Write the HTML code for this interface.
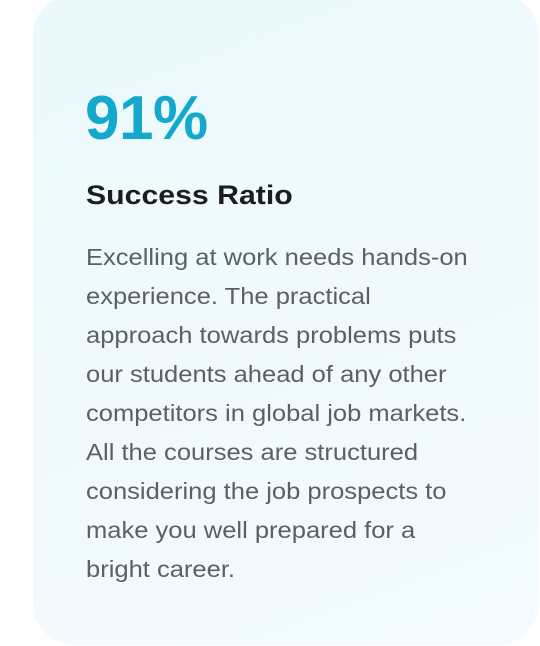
<!DOCTYPE html>
<html><head><style>
html,body{margin:0;padding:0;background:#fff;width:540px;height:646px;overflow:hidden}
.card{position:absolute;left:33px;top:-6px;width:506px;height:651px;border-radius:42px;background:linear-gradient(160deg,#ebf9fc 0%,#f0fafd 50%,#f3fbfe 100%);}
.n{position:absolute;left:85px;top:88px;font:bold 62px/1 "Liberation Sans",sans-serif;color:#14a8cc;letter-spacing:-0.5px}
.h{position:absolute;left:86px;top:179px;font:bold 27px/1.2 "Liberation Sans",sans-serif;color:#1b1d20;transform:scaleX(1.12);transform-origin:left}
.p{position:absolute;left:86px;top:238px;width:400px;font:23px/39px "Liberation Sans",sans-serif;color:#5b5f66;transform:scaleX(1.11);transform-origin:left;white-space:nowrap}
</style></head><body>
<div class="card"></div>
<div class="n">91%</div>
<div class="h">Success Ratio</div>
<div class="p">Excelling at work needs hands-on<br>experience. The practical<br>approach towards problems puts<br>our students ahead of any other<br>competitors in global job markets.<br>All the courses are structured<br>considering the job prospects to<br>make you well prepared for a<br>bright career.</div>
</body></html>
